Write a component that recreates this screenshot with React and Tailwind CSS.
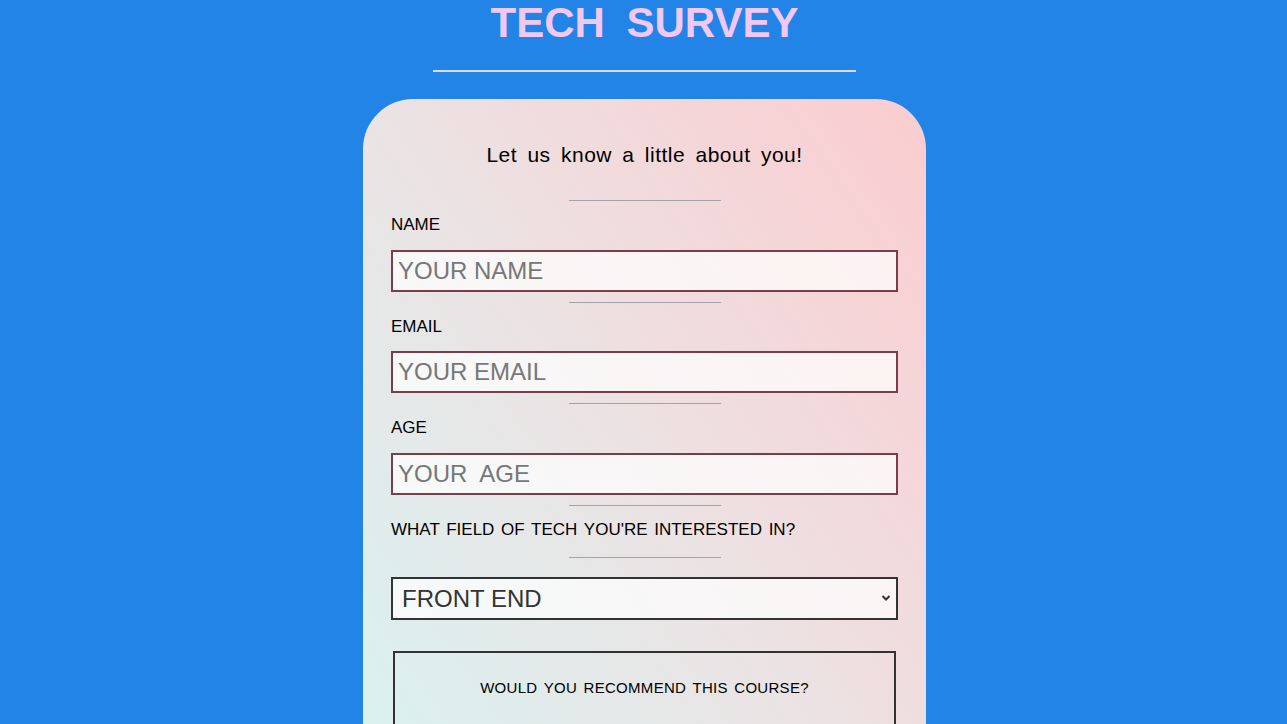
import { useState } from "react"

const Divider = ({ className = "" }) => (
  <div className={`mx-auto w-[152px] h-px bg-[#a3a3a8] ${className}`} />
)

const Field = ({ label, placeholder, type = "text", gap = "mt-[15px]" }) => (
  <div>
    <Divider />
    <label className="block mt-[14px] text-[17px] leading-[20px] text-black">{label}</label>
    <input
      type={type}
      placeholder={placeholder}
      className={`${gap} block w-full h-[42px] border-2 border-[#7b3c4c] bg-white/70 px-[5px] text-[24px] text-[#333] placeholder:text-[#777] outline-none`}
    />
    <div className="h-[10px]" />
  </div>
)

export default function App() {
  const [field, setField] = useState("front")

  return (
    <div className="min-h-screen bg-[#2284e6] pl-[2px] flex flex-col items-center font-['Liberation_Sans',Arial,sans-serif]">
      <h1 className="mt-[2px] text-[42px] leading-none font-bold text-[#f0c8f2] [word-spacing:10px]">
        TECH SURVEY
      </h1>
      <div className="mt-[26px] w-[423px] h-[2px] bg-[#dcdcee]" />

      <form className="mt-[27px] w-[563px] rounded-[50px] bg-linear-to-tr from-[#d4f5f3] via-[#ebe3e4] to-[#fbcccf] px-[28px] pt-[44px] pb-[40px]">
        <p className="text-center text-[21px] leading-[24px] text-black tracking-[0.5px] [word-spacing:4px]">
          Let us know a little about you!
        </p>

        <div className="mt-[33px]">
          <Field label="NAME" placeholder="YOUR NAME" />
          <Field label="EMAIL" placeholder="YOUR EMAIL" type="email" gap="mt-[14px]" />
          <Field label="AGE" placeholder="YOUR  AGE" type="number" />
        </div>

        <Divider />
        <p className="mt-[14px] text-[17px] leading-[20px] text-black [word-spacing:2px]">
          WHAT FIELD OF TECH YOU'RE INTERESTED IN?
        </p>
        <Divider className="mt-[17px]" />

        <div className="relative mt-[19px]">
          <select
            value={field}
            onChange={(e) => setField(e.target.value)}
            className="appearance-none block w-full h-[43px] border-2 border-[#333] bg-white/70 pl-[9px] text-[24px] text-[#333] outline-none"
          >
            <option value="front">FRONT END</option>
            <option value="back">BACK END</option>
            <option value="full">FULL STACK</option>
            <option value="data">DATA SCIENCE</option>
          </select>
          <svg className="absolute right-[7px] top-[17px] w-[10px] h-[8px]" viewBox="0 0 10 8">
            <path d="M1.5 2 L5 5.5 L8.5 2" fill="none" stroke="#333" strokeWidth="2" />
          </svg>
        </div>

        <div className="mt-[31px] mx-[2px] border-2 border-[#333] pt-[25px] pb-[24px] px-[20px]">
          <p className="text-center text-[15px] leading-[20px] text-black tracking-[0.3px] [word-spacing:2px]">
            WOULD YOU RECOMMEND THIS COURSE?
          </p>
          <div className="mt-[56px] flex flex-col items-center gap-2 text-[15px]">
            {["YES", "MAYBE", "NO"].map((o) => (
              <label key={o} className="flex items-center gap-2">
                <input type="radio" name="rec" /> {o}
              </label>
            ))}
          </div>
        </div>
      </form>
      <div className="h-[40px]" />
    </div>
  )
}
